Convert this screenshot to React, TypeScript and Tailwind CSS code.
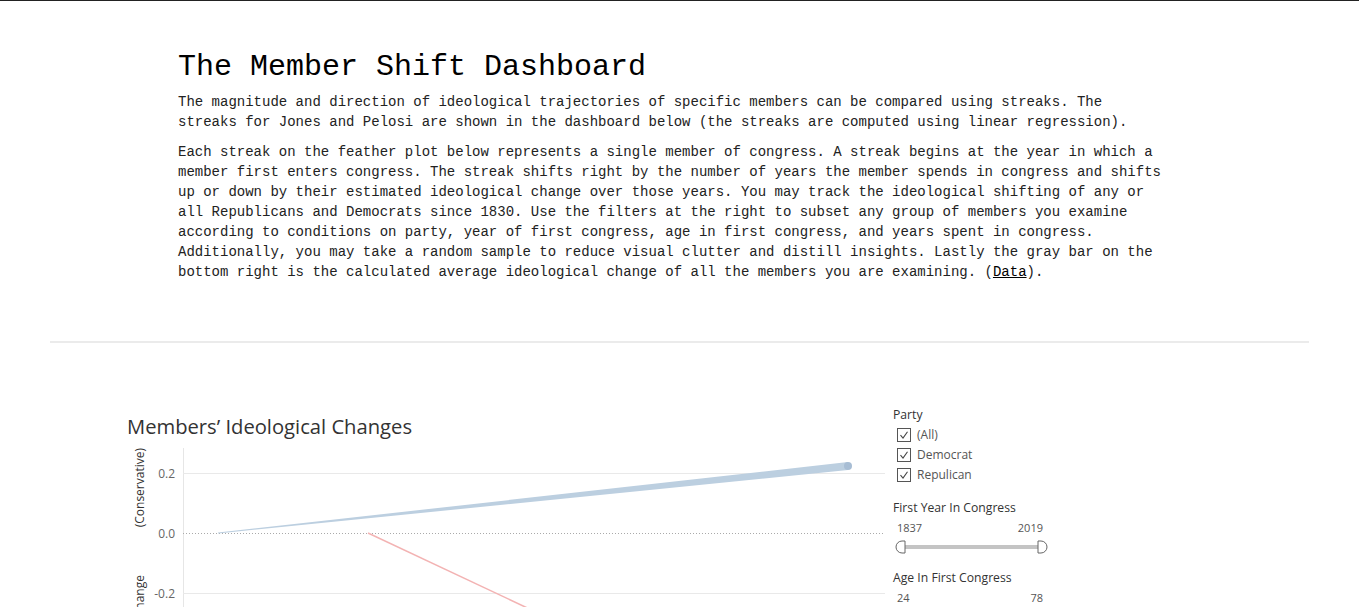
import React from 'react';

const mono = { fontFamily: '"Liberation Mono", "DejaVu Sans Mono", monospace' };
const sans = { fontFamily: '"Open Sans", "Noto Sans", Arial, sans-serif' };

const Checkbox = ({ label }: { label: string }) => (
  <div className="flex items-center h-[20px] pl-[4px] gap-[6px]">
    <svg width="14" height="14" viewBox="0 0 14 14">
      <rect x="0.5" y="0.5" width="13" height="13" fill="#fff" stroke="#555" />
      <path d="M3.5 7.2 L6 10 L10.5 3.8" fill="none" stroke="#444" strokeWidth="1.1" />
    </svg>
    <span className="text-[12px] text-[#555]">{label}</span>
  </div>
);

const RangeFilter = ({ title, min, max, className }: { title: string; min: string; max: string; className: string }) => (
  <div className={className}>
    <div className="text-[12.2px] text-[#333] font-medium leading-[18px]">{title}</div>
    <div className="flex justify-between pl-[4px] w-[150px] text-[11px] text-[#555] leading-[22px]">
      <span>{min}</span>
      <span>{max}</span>
    </div>
    <svg width="160" height="16" viewBox="0 0 160 16" className="block mt-[1px]">
      <rect x="10" y="5" width="138" height="4" fill="#c4c4c4" />
      <path d="M12 1 L9 1 A6 6 0 0 0 9 13 L12 13 Z" fill="#fff" stroke="#666" />
      <path d="M145 1 L148 1 A6 6 0 0 1 148 13 L145 13 Z" fill="#fff" stroke="#666" />
    </svg>
  </div>
);

export default function App() {
  return (
    <div className="min-h-screen bg-white border-t border-[#222]">
      <div className="ml-[178px] w-[986px] pt-[48px] text-black" style={mono}>
        <h1 className="text-[30px] leading-[36px] mb-[7px]">The Member Shift Dashboard</h1>
        <p className="text-[14px] leading-[20px] text-[#222] mb-[10px]">
          The magnitude and direction of ideological trajectories of specific members can be compared using streaks. The streaks for Jones and Pelosi are shown in the dashboard below (the streaks are computed using linear regression).
        </p>
        <p className="text-[14px] leading-[20px] text-[#222]">
          Each streak on the feather plot below represents a single member of congress. A streak begins at the year in which a member first enters congress. The streak shifts right by the number of years the member spends in congress and shifts up or down by their estimated ideological change over those years. You may track the ideological shifting of any or all Republicans and Democrats since 1830. Use the filters at the right to subset any group of members you examine according to conditions on party, year of first congress, age in first congress, and years spent in congress. Additionally, you may take a random sample to reduce visual clutter and distill insights. Lastly the gray bar on the bottom right is the calculated average ideological change of all the members you are examining. (<a className="underline text-black">Data</a>).
        </p>
      </div>

      <div className="mx-[50px] mt-[59px] h-[2px] bg-[#ebebeb]" />

      <div className="flex ml-[127px] mt-[63px]" style={sans}>
        <div className="w-[760px]">
          <div className="pt-[6px] text-[20.2px] leading-[28px] text-[#333] font-normal">Members’ Ideological Changes</div>
          <svg width="760" height="400" viewBox="0 0 760 400" className="block">
            <line x1="56.5" y1="8" x2="56.5" y2="400" stroke="#e6e6e6" />
            <line x1="56" y1="33.5" x2="758" y2="33.5" stroke="#e9e9e9" />
            <line x1="56" y1="153.5" x2="758" y2="153.5" stroke="#e9e9e9" />
            <line x1="56" y1="93.5" x2="758" y2="93.5" stroke="#aaa" strokeDasharray="1 2" />
            <g fontSize="12" fill="#666" textAnchor="end" fontFamily='"Open Sans", Arial, sans-serif'>
              <text x="48" y="38">0.2</text>
              <text x="48" y="98">0.0</text>
              <text x="48" y="158">-0.2</text>
            </g>
            <g fontSize="12" fill="#333" fontFamily='"Open Sans", Arial, sans-serif' textAnchor="end">
              <text transform="translate(17 8) rotate(-90)">(Conservative)</text>
              <text transform="translate(17 135) rotate(-90)">Ideological Change</text>
            </g>
            <line x1="241" y1="93" x2="560" y2="243" stroke="#f3b3b3" strokeWidth="1.5" />
            <polygon points="91,92.6 91,93.4 721,30 721,22" fill="#bccfe0" />
            <circle cx="721" cy="26" r="4" fill="#a7bdd4" />
          </svg>
        </div>
        <div className="ml-[6px] w-[170px]">
          <div className="text-[12.2px] text-[#333] font-medium leading-[18px]">Party</div>
          <div className="mt-[1px]">
            <Checkbox label="(All)" />
            <Checkbox label="Democrat" />
            <Checkbox label="Repulican" />
          </div>
          <RangeFilter title="First Year In Congress" min="1837" max="2019" className="mt-[14px]" />
          <RangeFilter title="Age In First Congress" min="24" max="78" className="mt-[13px]" />
        </div>
      </div>
    </div>
  );
}
